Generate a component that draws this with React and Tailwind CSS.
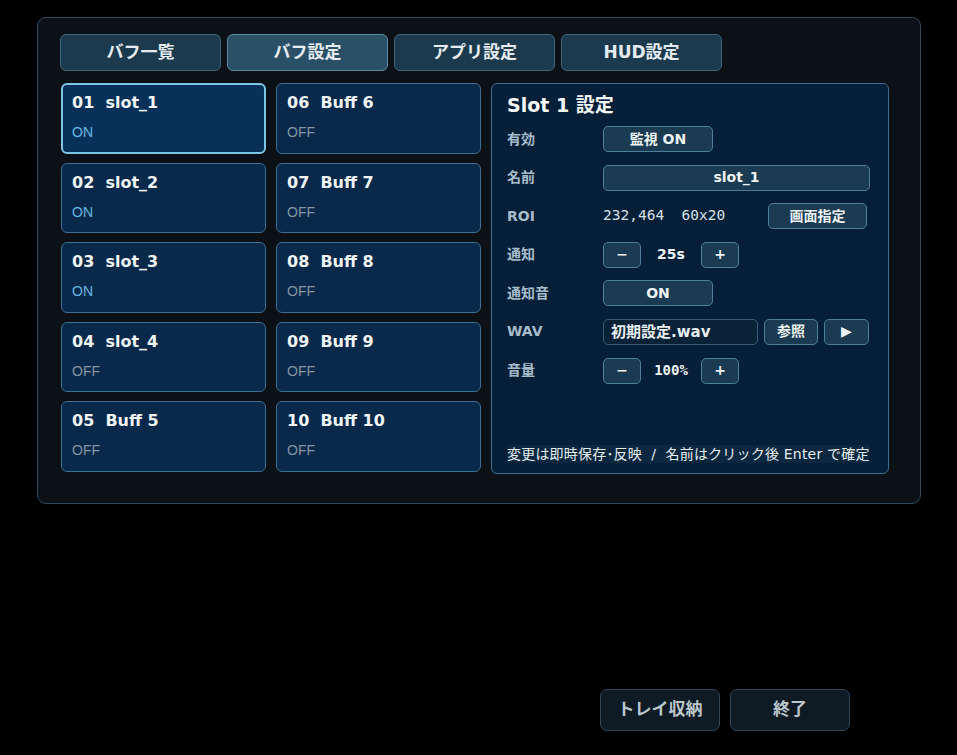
import { useState } from 'react';

const JP = { fontFamily: '"DejaVu Sans", "Noto Sans CJK JP", sans-serif' };
const MONO = { fontFamily: '"DejaVu Sans Mono", "Noto Sans CJK JP", monospace' };
const SANS = { fontFamily: '"Liberation Sans", "Noto Sans CJK JP", sans-serif' };

const TABS = ['バフ一覧', 'バフ設定', 'アプリ設定', 'HUD設定'];

const SLOTS = [
  { no: '01', name: 'slot_1', on: true },
  { no: '02', name: 'slot_2', on: true },
  { no: '03', name: 'slot_3', on: true },
  { no: '04', name: 'slot_4', on: false },
  { no: '05', name: 'Buff 5', on: false },
  { no: '06', name: 'Buff 6', on: false },
  { no: '07', name: 'Buff 7', on: false },
  { no: '08', name: 'Buff 8', on: false },
  { no: '09', name: 'Buff 9', on: false },
  { no: '10', name: 'Buff 10', on: false },
];

function SlotCard({ slot, selected, onClick }) {
  return (
    <div
      onClick={onClick}
      className={`h-[70.5px] rounded-md cursor-pointer ${
        selected
          ? 'border-[2px] border-[#7cc6e4] bg-[#08315a] px-[9px] pt-[8px]'
          : 'border border-[#3b6e90] bg-[#08294a] px-[10px] pt-[9px]'
      }`}
    >
      <div className="text-[16px] font-bold text-[#f1f5f8] leading-[20px] whitespace-pre" style={JP}>
        {slot.no}  {slot.name}
      </div>
      <div
        className={`mt-[10px] text-[14px] leading-[18px] ${slot.on ? 'text-[#62b9e2]' : 'text-[#8595a4]'}`}
        style={SANS}
      >
        {slot.on ? 'ON' : 'OFF'}
      </div>
    </div>
  );
}

function SmallBtn({ className = '', onClick, children }) {
  return (
    <button
      onClick={onClick}
      className={`h-[26px] rounded-[5px] border border-[#4d7f9a] bg-[#1a3b52] text-[14px] font-bold text-[#eef3f6] flex items-center justify-center ${className}`}
      style={JP}
    >
      {children}
    </button>
  );
}

function Row({ label, children }) {
  return (
    <div className="flex items-center h-[26px]">
      <div className="w-[96px] text-[14px] font-bold text-[#a7bccb]" style={JP}>{label}</div>
      <div className="flex items-center flex-1">{children}</div>
    </div>
  );
}

export default function App() {
  const [tab, setTab] = useState(1);
  const [selected, setSelected] = useState(0);
  const [notify, setNotify] = useState(25);
  const [volume, setVolume] = useState(100);

  const left = SLOTS.slice(0, 5);
  const right = SLOTS.slice(5);

  return (
    <div className="w-[957px] h-[755px] bg-black relative overflow-hidden" style={JP}>
      <div className="pt-[17px] pl-[37px] pr-[36px]">
        <div className="rounded-[9px] border border-[#2f4a5c] bg-[#0b1117] h-[487px] pl-[22px] pr-[22px] pt-[16px]">
          {/* tabs */}
          <div className="flex gap-[6px]">
            {TABS.map((t, i) => (
              <button
                key={t}
                onClick={() => setTab(i)}
                className={`w-[161px] h-[37px] rounded-[6px] border text-[17px] font-bold text-[#e4ecf1] ${
                  tab === i ? 'bg-[#2a5068] border-[#5d8ba3]' : 'bg-[#1c3a4d] border-[#3e6478]'
                }`}
                style={JP}
              >
                {t}
              </button>
            ))}
          </div>

          <div className="flex mt-[12px] gap-[10px]">
            {/* slot grid */}
            <div className="grid grid-cols-2 grid-rows-5 grid-flow-col gap-x-[10px] gap-y-[9px] w-[421px] pl-[1px] self-start">
              {left.map((s, i) => (
                <SlotCard key={s.no} slot={s} selected={selected === i} onClick={() => setSelected(i)} />
              ))}
              {right.map((s, i) => (
                <SlotCard key={s.no} slot={s} selected={selected === i + 5} onClick={() => setSelected(i + 5)} />
              ))}
            </div>

            {/* detail panel */}
            <div className="w-[398px] h-[391px] rounded-md border border-[#3b6e90] bg-[#061f38] px-[15px] pt-[9px] flex flex-col">
              <div className="text-[19px] font-bold text-[#f4f7f9] leading-[24px]" style={JP}>
                Slot {selected + 1} 設定
              </div>
              <div className="mt-[9px] flex flex-col gap-[12.6px]">
                <Row label="有効">
                  <SmallBtn className="w-[110px]">監視 ON</SmallBtn>
                </Row>
                <Row label="名前">
                  <SmallBtn className="w-[267px]">{SLOTS[selected].name}</SmallBtn>
                </Row>
                <Row label="ROI">
                  <span className="text-[14.5px] text-[#d6e0e7] whitespace-pre" style={MONO}>232,464  60x20</span>
                  <SmallBtn className="w-[99px] ml-auto mr-[6px]">画面指定</SmallBtn>
                </Row>
                <Row label="通知">
                  <SmallBtn className="w-[38px]" onClick={() => setNotify(notify - 1)}>−</SmallBtn>
                  <span className="w-[60px] text-center text-[14px] font-bold text-[#eef3f6]" style={JP}>{notify}s</span>
                  <SmallBtn className="w-[38px]" onClick={() => setNotify(notify + 1)}>+</SmallBtn>
                </Row>
                <Row label="通知音">
                  <SmallBtn className="w-[110px]">ON</SmallBtn>
                </Row>
                <Row label="WAV">
                  <div
                    className="w-[155px] h-[26px] rounded-[5px] border border-[#355a72] bg-[#0a2238] text-[15px] font-bold text-[#e8eef2] px-[7px] flex items-center"
                    style={JP}
                  >
                    初期設定.wav
                  </div>
                  <SmallBtn className="w-[54px] ml-[6px]">参照</SmallBtn>
                  <SmallBtn className="w-[45px] ml-[6px] text-[12px]">▶</SmallBtn>
                </Row>
                <Row label="音量">
                  <SmallBtn className="w-[38px]" onClick={() => setVolume(volume - 10)}>−</SmallBtn>
                  <span className="w-[60px] text-center text-[14px] font-bold text-[#eef3f6]" style={MONO}>{volume}%</span>
                  <SmallBtn className="w-[38px]" onClick={() => setVolume(volume + 10)}>+</SmallBtn>
                </Row>
              </div>
              <div className="mt-auto mb-[10px] self-start bg-[#0b2840] text-[14px] tracking-[0.2px] text-[#e6edf2] leading-[18px] whitespace-pre" style={JP}>
                変更は即時保存･反映  /  名前はクリック後 Enter で確定
              </div>
            </div>
          </div>
        </div>
      </div>

      {/* footer buttons */}
      <div className="absolute left-[600px] top-[689px] flex gap-[10px]">
        <button className="w-[120px] h-[42px] rounded-[7px] border border-[#2e4656] bg-[#0e1a24] text-[17px] font-bold text-[#bcc6cd]" style={JP}>
          トレイ収納
        </button>
        <button className="w-[120px] h-[42px] rounded-[7px] border border-[#2e4656] bg-[#0e1a24] text-[17px] font-bold text-[#bcc6cd]" style={JP}>
          終了
        </button>
      </div>
    </div>
  );
}
